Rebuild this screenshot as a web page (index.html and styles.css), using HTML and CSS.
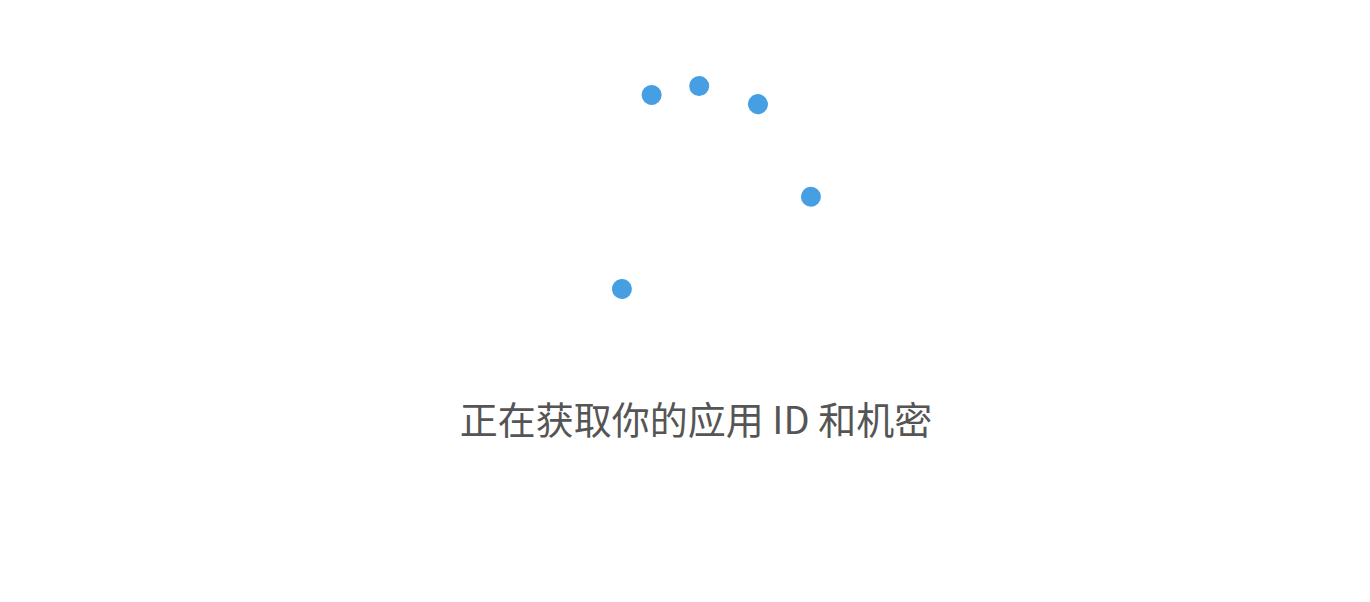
FILE: index.html
```html
<!DOCTYPE html>
<html lang="zh-CN">
<head>
<meta charset="utf-8">
<title>正在获取你的应用 ID 和机密</title>
<link rel="stylesheet" href="styles.css">
</head>
<body>
<main class="page">
  <div class="spinner" aria-hidden="true">
    <span class="dot d1"></span>
    <span class="dot d2"></span>
    <span class="dot d3"></span>
    <span class="dot d4"></span>
    <span class="dot d5"></span>
  </div>
  <p class="status">正在获取你的应用 ID 和机密</p>
</main>
</body>
</html>
```

FILE: styles.css
```css
html, body {
  margin: 0;
  padding: 0;
  background: #ffffff;
}

.page {
  display: flex;
  flex-direction: column;
  align-items: center;
  padding: 76px 0 0 22px;
}

.spinner {
  position: relative;
  width: 250px;
  height: 250px;
}

.dot {
  position: absolute;
  left: 115px;
  top: 115px;
  width: 20px;
  height: 20px;
  border-radius: 50%;
  background: #479fe3;
}

.d1 { transform: rotate(-22.7deg) translateY(-115px); }
.d2 { transform: rotate(1.6deg) translateY(-115px); }
.d3 { transform: rotate(32.6deg) translateY(-115px); }
.d4 { transform: rotate(87.9deg) translateY(-115px); }
.d5 { transform: rotate(220.1deg) translateY(-115px); }

.status {
  margin: 68px 0 0;
  font-family: "Noto Sans CJK SC", "Noto Sans", sans-serif;
  font-weight: 400;
  font-size: 38px;
  line-height: 48px;
  color: #555555;
  white-space: nowrap;
}
```
